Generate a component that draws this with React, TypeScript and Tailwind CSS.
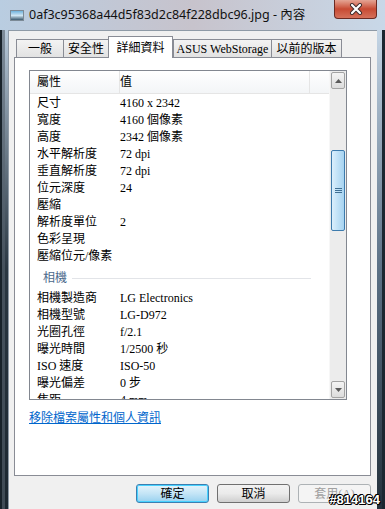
import React from "react";

const ui = { fontFamily: '"Liberation Serif", "Noto Sans CJK TC", serif' };
const title = { fontFamily: '"Noto Sans", "Noto Sans CJK TC", sans-serif' };

type Row = [string, string];

const imageRows: Row[] = [
  ["尺寸", "4160 x 2342"],
  ["寬度", "4160 個像素"],
  ["高度", "2342 個像素"],
  ["水平解析度", "72 dpi"],
  ["垂直解析度", "72 dpi"],
  ["位元深度", "24"],
  ["壓縮", ""],
  ["解析度單位", "2"],
  ["色彩呈現", ""],
  ["壓縮位元/像素", ""],
];

const cameraRows: Row[] = [
  ["相機製造商", "LG Electronics"],
  ["相機型號", "LG-D972"],
  ["光圈孔徑", "f/2.1"],
  ["曝光時間", "1/2500 秒"],
  ["ISO 速度", "ISO-50"],
  ["曝光偏差", "0 步"],
  ["焦距", "4 mm"],
];

const tabs = [
  { label: "一般", w: "w-[47px]" },
  { label: "安全性", w: "w-[45px]" },
  { label: "詳細資料", w: "w-[65px]", active: true },
  { label: "ASUS WebStorage", w: "w-[98px]" },
  { label: "以前的版本", w: "w-[71px]" },
];

function PropRow({ row }: { row: Row }) {
  return (
    <div className="flex h-[17px] items-center text-[12px] text-black">
      <div className="w-[90px] pl-[7px] whitespace-nowrap">{row[0]}</div>
      <div className="whitespace-nowrap">{row[1]}</div>
    </div>
  );
}

function ArrowButton({ up }: { up?: boolean }) {
  return (
    <div className="mx-px h-[17px] rounded-[2px] border border-[#a3a3a3] bg-gradient-to-b from-[#f4f4f4] to-[#dcdcdc] flex items-center justify-center">
      <svg width="7" height="4" viewBox="0 0 7 4">
        <path d={up ? "M0 4 L3.5 0 L7 4 Z" : "M0 0 L3.5 4 L7 0 Z"} fill="#5a5a5a" />
      </svg>
    </div>
  );
}

export default function App() {
  return (
    <div className="relative w-[385px] h-[509px] overflow-hidden flex flex-col bg-gradient-to-r from-[#b9cde1] via-[#c7c3cc] to-[#c8d8e8]">
      {/* title bar */}
      <div className="h-[30px] flex items-start shrink-0">
        <div className="ml-[10px] mt-[10px] w-[14px] h-[11px] border border-[#7c8a96] bg-gradient-to-b from-[#6fb3dc] via-[#cfe6f3] to-[#3d5b6e]" />
        <div style={title} className="ml-[5px] mt-[6px] text-[12.5px] leading-[17px] text-[#111] whitespace-nowrap">
          0af3c95368a44d5f83d2c84f228dbc96.jpg - 內容
        </div>
        <div className="ml-auto mr-[8px] w-[43px] h-[19px] rounded-b-[4px] border border-t-0 border-[#6b2a22] bg-gradient-to-b from-[#e4a494] via-[#c74a33] to-[#d5705a] flex items-center justify-center">
          <svg width="14" height="12" viewBox="0 0 14 12">
            <path d="M3 2 L11 10 M11 2 L3 10" stroke="#3a2a2a" strokeWidth="4" strokeLinecap="round" />
            <path d="M3 2 L11 10 M11 2 L3 10" stroke="#fff" strokeWidth="2.2" strokeLinecap="round" />
          </svg>
        </div>
      </div>

      <div className="flex flex-1">
        {/* left frame */}
        <div className="w-[8px] bg-gradient-to-b from-[#b7c9da] via-[#2a3742] to-[#1c2730] flex">
          <div className="w-[2px] bg-[#18222a]" />
          <div className="w-[3px] bg-[#56636e]/60" />
        </div>

        {/* client */}
        <div className="flex-1 bg-[#f0f0f0] border-l border-t border-[#8e9aa6]">
          <div className="ml-[5px] w-[357px]">
            {/* tabs */}
            <div style={ui} className="mt-[4px] h-[22px] pl-[2px] flex items-end">
              {tabs.map((t) =>
                t.active ? (
                  <div
                    key={t.label}
                    className={`${t.w} h-[22px] -mb-px relative z-10 border border-b-0 border-[#898c95] bg-white flex items-center justify-center text-[12px] text-black`}
                  >
                    {t.label}
                  </div>
                ) : (
                  <div
                    key={t.label}
                    className={`${t.w} h-[18px] border border-b-0 border-r-0 last:border-r border-[#898c95] bg-gradient-to-b from-[#f3f3f3] to-[#e2e2e2] flex items-center justify-center text-[12px] text-black whitespace-nowrap`}
                  >
                    {t.label}
                  </div>
                )
              )}
            </div>

            {/* panel */}
            <div style={ui} className="h-[419px] border border-[#898c95] bg-white">
              <div className="ml-[14px] mt-[12px] w-[318px] h-[330px] border border-[#828790] flex">
                <div className="flex-1 overflow-hidden">
                  <div className="h-[23px] flex border-b border-[#e5e5e5] bg-gradient-to-b from-white to-[#f3f5f7] text-[12px] text-black">
                    <div className="w-[90px] pl-[7px] flex items-center border-r border-[#e5e5e5]">屬性</div>
                    <div className="w-[190px] pl-[0px] flex items-center border-r border-[#e5e5e5]">值</div>
                  </div>
                  {imageRows.map((r) => (
                    <PropRow key={r[0]} row={r} />
                  ))}
                  <div className="h-[25px] flex items-center pt-[3px] pl-[13px] pr-[18px] gap-[5px]">
                    <span className="text-[12px] text-[#4b6a8c]">相機</span>
                    <div className="flex-1 h-px bg-[#e2e4e8]" />
                  </div>
                  {cameraRows.map((r) => (
                    <PropRow key={r[0]} row={r} />
                  ))}
                </div>
                {/* scrollbar */}
                <div className="w-[17px] bg-[#ececec] border-l border-[#f7f7f7] flex flex-col pt-px pb-px">
                  <ArrowButton up />
                  <div className="h-[61px]" />
                  <div className="mx-px h-[81px] rounded-[2px] border border-[#3d7bad] bg-gradient-to-r from-[#dbeffc] via-[#bfe1f7] to-[#a7d3f0] flex items-center justify-center">
                    <div className="flex flex-col gap-[1px]">
                      <div className="w-[7px] h-px bg-[#3f6f94]" />
                      <div className="w-[7px] h-px bg-[#3f6f94]" />
                      <div className="w-[7px] h-px bg-[#3f6f94]" />
                    </div>
                  </div>
                  <div className="flex-1" />
                  <ArrowButton />
                </div>
              </div>
              <div className="ml-[14px] mt-[10px] text-[12px] leading-[16px] text-[#0066cc] underline">
                移除檔案屬性和個人資訊
              </div>
            </div>

            {/* buttons */}
            <div style={ui} className="mt-[8px] flex justify-end gap-[8px] text-[12px]">
              <div className="w-[73px] h-[19px] rounded-[3px] border border-[#3c7fb1] bg-gradient-to-b from-[#e5f4fc] via-[#c4e5f6] to-[#98d1ef] flex items-center justify-center text-black shadow-[inset_0_0_0_1px_#48d2ff]">
                確定
              </div>
              <div className="w-[73px] h-[19px] rounded-[3px] border border-[#707070] bg-gradient-to-b from-[#f2f2f2] via-[#ebebeb] to-[#cfcfcf] flex items-center justify-center text-black">
                取消
              </div>
              <div className="w-[73px] h-[19px] rounded-[3px] border border-[#adb2b5] bg-[#f4f4f4] flex items-center justify-center text-[#a0a0a0]">
                套用(A)
              </div>
            </div>
          </div>
        </div>

        {/* right frame */}
        <div className="w-[8px] bg-gradient-to-b from-[#c5d6e6] via-[#5c7186] to-[#24313c] flex justify-end">
          <div className="w-[3px] bg-[#1b2731]" />
        </div>
      </div>

      <div className="absolute right-[5px] bottom-[2px] text-[13px] leading-[15px] font-bold text-white [font-family:'Liberation_Sans',sans-serif] [text-shadow:-1px_0_#000,1px_0_#000,0_1px_#000,0_-1px_#000,1px_1px_#000,-1px_-1px_#000]">
        #814164
      </div>
    </div>
  );
}
